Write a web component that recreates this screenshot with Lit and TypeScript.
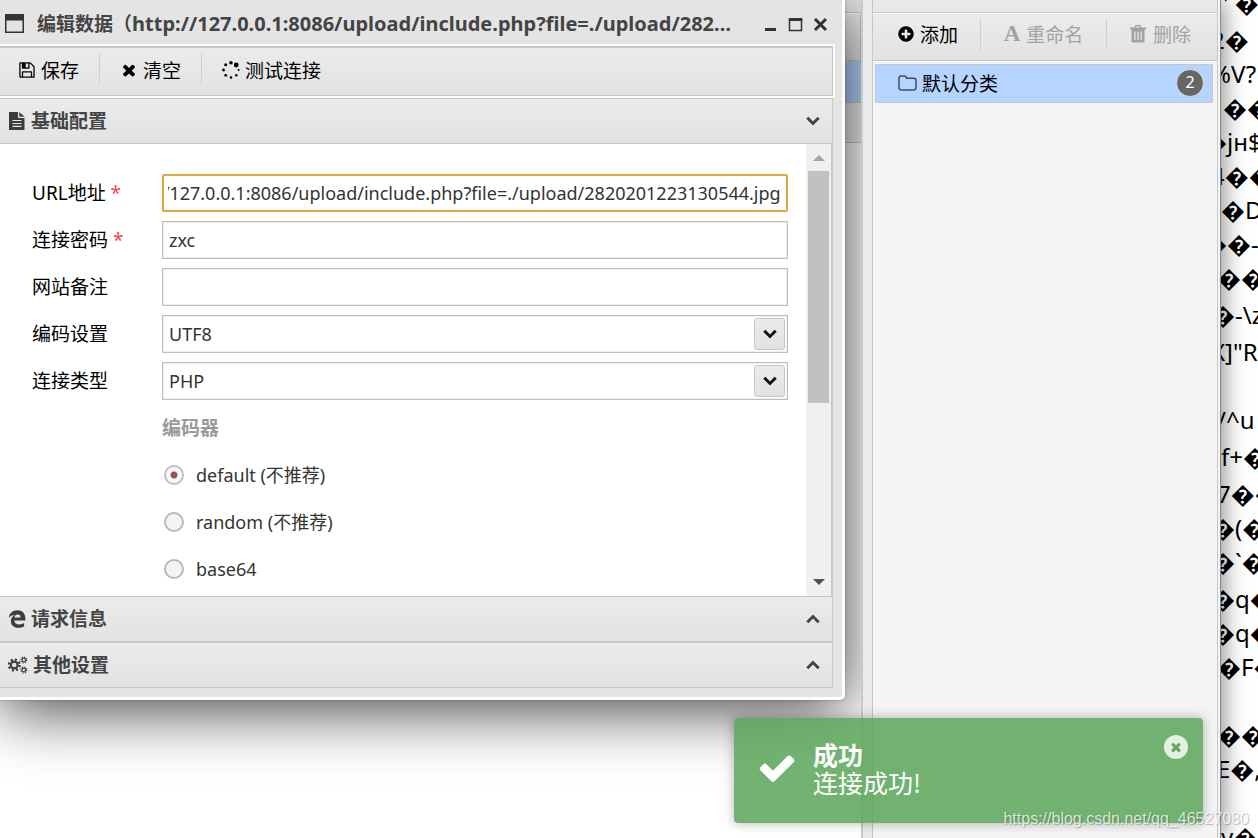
import { LitElement, html, css, svg } from "lit";
import { customElement, query, state } from "lit/decorators.js";
import { classMap } from "lit/directives/class-map.js";

const SITE_URL =
  "http://127.0.0.1:8086/upload/include.php?file=./upload/2820201223130544.jpg";

/* ---------- icons ---------- */
const fa = (d: string) =>
  html`<svg class="icon" viewBox="0 0 1792 1792" aria-hidden="true"><path d=${d}></path></svg>`;

const D_SAVE =
  "M512 1536h768v-384h-768v384zm896 0h128v-896q0-14-10-38.5t-20-34.5l-281-281q-10-10-34-20t-39-10v416q0 40-28 68t-68 28h-576q-40 0-68-28t-28-68v-416h-128v1280h128v-416q0-40 28-68t68-28h832q40 0 68 28t28 68v416zm-384-928v-320q0-13-9.5-22.500t-22.500-9.500h-192q-13 0-22.500 9.500t-9.500 22.500v320q0 13 9.500 22.500t22.500 9.500h192q13 0 22.500-9.500t9.500-22.500zm640 32v928q0 40-28 68t-68 28h-1344q-40 0-68-28t-28-68v-1344q0-40 28-68t68-28h928q40 0 88 20t76 48l280 280q28 28 48 76t20 88z";
const D_CLOSE =
  "M1490 1322q0 40-28 68l-136 136q-28 28-68 28t-68-28l-294-294-294 294q-28 28-68 28t-68-28l-136-136q-28-28-28-68t28-68l294-294-294-294q-28-28-28-68t28-68l136-136q28-28 68-28t68 28l294 294 294-294q28-28 68-28t68 28l136 136q28 28 28 68t-28 68l-294 294 294 294q28 28 28 68z";
const D_PLUS =
  "M1344 960v-128q0-26-19-45t-45-19h-256v-256q0-26-19-45t-45-19h-128q-26 0-45 19t-19 45v256h-256q-26 0-45 19t-19 45v128q0 26 19 45t45 19h256v256q0 26 19 45t45 19h128q26 0 45-19t19-45v-256h256q26 0 45-19t19-45zm320-64q0 209-103 385.500t-279.500 279.500-385.500 103-385.500-103-279.500-279.500-103-385.500 103-385.500 279.500-279.500 385.500-103 385.500 103 279.500 279.500 103 385.500z";
const D_CHECK =
  "M1671 566q0 40-28 68l-724 724-136 136q-28 28-68 28t-68-28l-136-136-362-362q-28-28-28-68t28-68l136-136q28-28 68-28t68 28l294 295 656-657q28-28 68-28t68 28l136 136q28 28 28 68z";

const iconSpinner = html`<svg class="icon" viewBox="0 0 18 18" aria-hidden="true">
  <circle cx="9" cy="1.800" r="1.800"></circle><circle cx="14.200" cy="4" r="2.400"></circle>
  <circle cx="16.600" cy="9" r="1"></circle><circle cx="14.300" cy="14.300" r="1.200"></circle>
  <circle cx="9" cy="16.500" r="1.300"></circle><circle cx="3.700" cy="14.300" r="1.400"></circle>
  <circle cx="1.500" cy="9" r="1.400"></circle><circle cx="3.700" cy="3.800" r="1.500"></circle>
</svg>`;
const iconWindow = html`<svg class="icon win" viewBox="0 0 19 19" aria-hidden="true">
  <path d="M0 0h19v19H0zM1.500 6.500v11h16v-11z" fill-rule="evenodd"></path></svg>`;
const iconFile = html`<svg class="icon" viewBox="0 0 18 18" aria-hidden="true">
  <path d="M1 0h9v6h6.500v12H1zM4.500 8v1.100h9V8zM4.500 10.900V12h9v-1.100zM4.500 13.800v1.100h9v-1.100z" fill-rule="evenodd"></path>
  <path d="M11.300 0l5.200 4.800h-5.200z"></path></svg>`;
const iconEdge = html`<svg class="icon" viewBox="0 0 18 18" aria-hidden="true">
  <path fill-rule="evenodd" d="M.8 7.800C1.400 3 5 .3 9.400.3c5 0 7.900 3.500 7.900 8v2.200H6.200c.1 2.800 2.300 4 5 4 1.900 0 3.500-.5 4.900-1.400v3.400c-1.600.9-3.500 1.300-5.600 1.300-4.500 0-7.600-2.500-7.600-6.600 0-2.700 1.300-4.900 3.700-6.200C4.200 5.300 2.200 6 .8 7.800zM6.300 7.600h6.300c0-2-.9-3.200-2.900-3.200S6.600 5.800 6.300 7.600z"></path></svg>`;

const gear = (x: number, y: number, r: number, w: number) => {
  const teeth = (2 * Math.PI * (r + w)) / 16;
  return svg`<circle cx=${x} cy=${y} r=${r} fill="none" stroke="currentColor" stroke-width=${w}></circle>
    <circle cx=${x} cy=${y} r=${r + w} fill="none" stroke="currentColor" stroke-width=${w}
      stroke-dasharray="${teeth} ${teeth}"></circle>`;
};
const iconCogs = html`<svg class="icon cogs" viewBox="0 0 20 18" aria-hidden="true">
  ${gear(6.2, 9, 3.4, 2.1)}${gear(15.8, 4, 1.8, 1.2)}${gear(15.8, 14, 1.8, 1.2)}</svg>`;
const iconTrash = html`<svg class="icon" viewBox="0 0 16 18" aria-hidden="true">
  <path fill-rule="evenodd" d="M5.500 0h5l1 2.500H16v2h-1.500V16q0 1.500-1.500 1.500H3Q1.500 17.500 1.500 16V4.500H0v-2h4.500zM6.300 1.300l-.5 1.200h4.400l-.5-1.200zM4.200 6.500v8.500h1.300V6.500zM7.400 6.500v8.500h1.300V6.500zM10.500 6.500v8.500h1.300V6.500z"></path></svg>`;
const iconFolder = html`<svg class="icon folder" viewBox="0 0 19 16" aria-hidden="true">
  <path d="M1 3.300Q1 1 3.200 1h3.200q2 0 2.200 2.300h7q2.400 0 2.400 2.300v7q0 2.400-2.400 2.400H3.300Q1 15 1 12.600z"></path></svg>`;
const chevron = (up: boolean) => html`<svg class="chevron" viewBox="0 0 14 10" aria-hidden="true">
  <path d=${up ? "M1.300 8.200L7 2.500l5.700 5.700" : "M1.300 1.800L7 7.500l5.700-5.700"}></path></svg>`;

/* ---------- raw response text behind the window ---------- */
interface DumpLine { text: string; shift?: "s" | "m" | "l" | "in"; tall?: boolean }
const DUMP: DumpLine[] = [
  { text: "' \uFFFD", shift: "in" },
  { text: "2\uFFFD", shift: "m", tall: true },
  { text: "%V?", shift: "m" },
  { text: "\uFFFD\uFFFD", shift: "in" },
  { text: "\uFFFDjн$", shift: "l" },
  { text: "4\uFFFD\uFFFD", shift: "m" },
  { text: "\uFFFDD" },
  { text: "\uFFFD\uFFFD-", shift: "l" },
  { text: "\uFFFD\uFFFD", shift: "s" },
  { text: "\uFFFD-\\z", shift: "m", tall: true },
  { text: "X]\"R", shift: "m", tall: true },
  { text: "" },
  { text: "/^u", shift: "s" },
  { text: "f+\uFFFD", tall: true },
  { text: "7\uFFFD\uFFFD", shift: "s", tall: true },
  { text: "\uFFFD(\uFFFD", shift: "m" },
  { text: "\uFFFD`\uFFFD", shift: "m" },
  { text: "\uFFFDq\uFFFD", shift: "m", tall: true },
  { text: "\uFFFDq\uFFFD", shift: "m" },
  { text: "\uFFFDF\uFFFD", shift: "s" },
  { text: "" },
  { text: "\uFFFD\uFFFD", shift: "s" },
  { text: "E\uFFFD,", shift: "s" },
  { text: "" },
  { text: "y\uFFFD" },
];

@customElement("app-root")
export class AppRoot extends LitElement {
  @state() private encoder = "default";
  @query("#url") private urlInput!: HTMLInputElement;

  static styles = css`
    * { box-sizing: border-box; }
    :host {
      display: block;
      height: 100vh;
      position: relative;
      overflow: hidden;
      background: #fff;
      color: #000;
      font: 18px/26px "Noto Sans", "Noto Sans CJK SC", sans-serif;
      --bar: linear-gradient(#ebebeb, #e2e2e2);
      --line: #c7c7c7;
    }
    button, input, select { font: inherit; color: inherit; }
    button { background: none; border: 0; padding: 0; cursor: pointer; }
    .zh { font-family: "Noto Sans CJK SC", sans-serif; font-size: 19px; }
    .icon { width: 18px; height: 18px; fill: currentColor; flex: none; display: block; }
    .chevron { width: 14px; height: 10px; fill: none; stroke: currentColor; stroke-width: 3; display: block; }

    .desktop { display: flex; height: 100%; }
    .app { flex: 1; min-width: 0; display: flex; background: #eaeaea; position: relative; z-index: 1;
      border-right: 1px solid #888; box-shadow: 0 0 24px rgba(0, 0, 0, .55); }
    .sites { flex: 1; min-width: 0; position: relative; overflow: hidden; background: #fff; border-right: 2px solid #c9c9c9; }
    .strip { height: 13px; background: #e8e8e8; border-bottom: 1px solid var(--line); }
    .grid-head { height: 48px; background: var(--bar); border: 1px solid var(--line); border-top-color: #fff; }
    .grid-row { height: 42px; background: #b5d4ff; border-bottom: 1px solid var(--line); }
    .grid-row.alt { height: 40px; background: #ececec; }

    .groups { width: 346px; margin-left: 9px; background: #f4f4f4; border: solid var(--line); border-width: 0 1px; }
    .edge { width: 2px; background: #f4f4f4; }
    .group-bar { display: flex; align-items: center; height: 48px; padding: 0 26px 6px 24px; justify-content: space-between;
      background: var(--bar); border-bottom: 1px solid var(--line); border-top: 1px solid #f8f8f8; }
    .group-bar i { width: 1px; height: 31px; background: #c4d3d8; }
    .tool { display: flex; align-items: center; gap: 5px; white-space: nowrap; }
    .tool[disabled] { color: #a2a2a2; cursor: default; gap: 6px; }
    .letter { font: bold 23px/18px "Liberation Serif", serif; }
    .group-list { list-style: none; margin: 0; padding: 2px 4px 2px 2px; border-top: 1px solid #fff; }
    .group-item { display: flex; align-items: center; width: 100%; height: 39px; padding: 0 8px 2px 22px; gap: 5px;
      background: #b5d4ff; border: 1px solid #c3c7cc; }
    .folder { width: 19px; height: 16px; fill: none; stroke: #454d59; stroke-width: 1.500; }
    .badge { margin-left: auto; width: 28px; height: 28px; border-radius: 50%; border: 1px solid #ddd; background: #666; color: #fff;
      font: 16px/25px "Noto Sans", sans-serif; text-align: center; }

    .dump { width: 37px; overflow: hidden; margin: -14px 0 0; font: 24px/34px "Noto Sans", "DejaVu Sans", sans-serif; }
    .dump div { height: 34px; white-space: pre; }
    .dump .tall { height: 37px; padding-top: 3px; }
    .dump .s { margin-left: -4px; }
    .dump .m { margin-left: -10px; }
    .dump .l { margin-left: -18px; }
    .dump .in { margin-left: 2px; }

    .dialog { position: absolute; top: 0; left: 0; right: 16px; background: #e4e4e4; border: solid #fdfdfd; border-width: 0 3px 3px 0;
      border-radius: 0 0 5px 0; padding: 0 9px 9px 0; color: #444;
      box-shadow: 0 10px 64px rgba(0, 0, 0, .75), 0 0 2px 1px rgba(0, 0, 0, .12); }
    .title { display: flex; align-items: center; height: 46px; padding-left: 5px; }
    .title h1 { flex: 1; min-width: 0; margin: 0 26px 0 13px; font-size: 20px; line-height: 26px; font-weight: 700;
      overflow: hidden; text-overflow: ellipsis; white-space: nowrap; color: #444; }
    .title button { height: 18px; display: flex; align-items: center; }
    .title .controls { display: flex; gap: 10px; padding-top: 2px; padding-right: 5px; }
    .ctl { width: 15px; height: 15px; fill: none; stroke: #333; display: block; }
    .win { width: 19px; height: 19px; color: #333; }

    .bar { display: flex; align-items: center; height: 50px; padding: 0 18px 4px; background: var(--bar);
      border: solid var(--line); border-width: 2px 1px 1px 0; box-shadow: 0 0 0 2px #fafafa; color: #000; }
    .bar i { width: 1px; height: 31px; background: #c4d3d8; margin: 0 20px; }
    .head { display: flex; align-items: center; width: 100%; height: 46px; padding: 0 12px 0 8px; gap: 5px; background: var(--bar);
      border: solid var(--line); border-width: 1px 1px 1px 0; color: #444; font-weight: 500; }
    .head.first { margin-top: 2px; height: 46px; }
    .head b { flex: 1; text-align: left; font-weight: 700; font-size: 19px; line-height: 24px; padding-bottom: 3px; font-family: "Noto Sans CJK SC", sans-serif; }
    .head .icon { color: #3c3c3c; }
    .cogs { width: 20px; }

    .body { display: flex; background: #fff; border-right: 2px solid var(--line); }
    .form { flex: 1; min-width: 0; display: grid; gap: 9px; padding: 30px 18px 8px 32px; margin: 0; color: #333; }
    .field { display: grid; grid-template-columns: 130px minmax(0, 1fr); align-items: center; height: 38px; }
    .field label { color: #000; font-size: 19px; }
    .field em { font-style: normal; color: #f44; }
    .field input, .field select { width: 100%; height: 38px; border: 1px solid #bfbfbf; border-radius: 0; outline: 0; background: #fff;
      padding: 0 6px; color: #333; appearance: none; box-shadow: inset 0 0 0 1px #eee; }
    .field .active { border: 2px solid #dfa743; border-radius: 2px; box-shadow: none; padding: 0 5px 0 4px; }
    .pick { position: relative; }
    .pick span { position: absolute; right: 3px; top: 3px; width: 31px; height: 32px; display: grid; place-items: center;
      background: var(--bar); border: 1px solid #c6c6c6; border-radius: 3px; color: #111; pointer-events: none; }
    .legend { color: #999; font-size: 19px; font-weight: 700; line-height: 38px; padding-left: 130px; }
    .radio { display: flex; align-items: center; gap: 12px; height: 38px; padding-left: 132px; color: #333; }
    .radio input { appearance: none; width: 20px; height: 20px; margin: 0; border: 2px solid #bdb8b8; border-radius: 50%; background: #f3f5f5; }
    .radio input:checked { border-color: #bcc0c8; background: radial-gradient(circle, #985050 0 3px, #fafafa 4px); }

    .scroll { width: 25px; background: #f0f0f0; padding: 11px 2px; display: flex; flex-direction: column; align-items: center; }
    .scroll::before { content: ""; border: 6px solid transparent; border-top: 0; border-bottom-color: #a3a3a3; }
    .scroll::after { content: ""; border: 6px solid transparent; border-bottom: 0; border-top-color: #505050; margin-top: auto; }
    .thumb { width: 21px; height: 54%; margin-top: 10px; background: #c1c1c1; }

    .toast { position: absolute; z-index: 2; right: 55px; bottom: 15px; width: 469px; display: flex; align-items: center; gap: 16px;
      padding: 22px 15px 27px 23px; background: rgba(91, 167, 91, .86); border-radius: 4px; color: #fff;
      box-shadow: 0 0 12px rgba(0, 0, 0, .3); font: 25px/28px "Noto Sans CJK SC", sans-serif; }
    .toast .icon { width: 40px; height: 40px; }
    .toast p, .toast h2 { margin: 0; font-size: 25px; line-height: 28px; }
    .toast button { margin-left: auto; align-self: flex-start; width: 24px; height: 24px; border-radius: 50%; background: rgba(255, 255, 255, .8);
      color: #5fa65f; display: grid; place-items: center; margin-top: -5px; }
    .toast button .icon { width: 14px; height: 14px; }
    .mark { position: absolute; z-index: 3; right: 9px; bottom: 9px; color: rgba(255, 255, 255, .75); text-shadow: 1px 1px 1px rgba(0, 0, 0, .25);
      font: 16px/20px "Liberation Sans", sans-serif; }
  `;

  firstUpdated() {
    this.urlInput.scrollLeft = this.urlInput.scrollWidth;
  }

  private radio(value: string, label: string) {
    return html`<label class="radio"><input type="radio" name="encoder" .value=${value}
      ?checked=${this.encoder === value} @change=${() => (this.encoder = value)} />${label}</label>`;
  }

  render() {
    return html`
      <div class="desktop">
        <div class="app">
          <main class="sites">
            <div class="strip"></div>
            <div class="grid-head"></div>
            <div class="grid-row"></div>
            <div class="grid-row alt"></div>
            ${this.renderDialog()}
          </main>
          <aside class="groups">
            <div class="strip"></div>
            <div class="group-bar">
              <button class="tool">${fa(D_PLUS)}<span class="zh">添加</span></button><i></i>
              <button class="tool" disabled><span class="letter">A</span><span class="zh">重命名</span></button><i></i>
              <button class="tool" disabled>${iconTrash}<span class="zh">删除</span></button>
            </div>
            <ul class="group-list">
              <li><button class="group-item">${iconFolder}<span class="zh">默认分类</span><span class="badge">2</span></button></li>
            </ul>
          </aside>
          <div class="edge"></div>
        </div>
        <div class="dump">
          ${DUMP.map((l) => html`<div class=${classMap({ tall: !!l.tall, [l.shift ?? "flush"]: true })}>${l.text}</div>`)}
        </div>
      </div>
      <div class="toast" role="status">
        ${fa(D_CHECK)}
        <div><h2>成功</h2><p>连接成功!</p></div>
        <button aria-label="关闭">${fa(D_CLOSE)}</button>
      </div>
      <div class="mark">https://blog.csdn.net/qq_46527080</div>
    `;
  }

  private renderDialog() {
    return html`
      <section class="dialog" role="dialog" aria-labelledby="title">
        <header class="title">
          ${iconWindow}
          <h1 id="title"><span class="zh">编辑数据（</span>${SITE_URL}<span class="zh">）</span></h1>
          <div class="controls">
            <button aria-label="最小化"><svg class="ctl" viewBox="0 0 15 15"><path d="M2 12.500h11" stroke-width="3"></path></svg></button>
            <button aria-label="最大化"><svg class="ctl" viewBox="0 0 15 15"><path d="M1.500 2v11.500h12V2" stroke-width="1.500"></path><path d="M.8 2.500h13.500" stroke-width="3"></path></svg></button>
            <button aria-label="关闭"><svg class="ctl" viewBox="0 0 15 15"><path d="M2 2l11 11M13 2L2 13" stroke-width="3"></path></svg></button>
          </div>
        </header>
        <div class="bar" role="toolbar">
          <button class="tool">${fa(D_SAVE)}<span class="zh">保存</span></button><i></i>
          <button class="tool">${fa(D_CLOSE)}<span class="zh">清空</span></button><i></i>
          <button class="tool">${iconSpinner}<span class="zh">测试连接</span></button>
        </div>
        <button class="head first" aria-expanded="true">${iconFile}<b>基础配置</b>${chevron(false)}</button>
        <div class="body">
          <form class="form">
            <div class="field"><label for="url">URL地址 <em>*</em></label><input id="url" class="active" .value=${SITE_URL} /></div>
            <div class="field"><label for="pwd">连接密码 <em>*</em></label><input id="pwd" value="zxc" /></div>
            <div class="field"><label for="note">网站备注</label><input id="note" /></div>
            <div class="field"><label for="enc">编码设置</label>
              <div class="pick"><select id="enc"><option>UTF8</option></select><span>${chevron(false)}</span></div></div>
            <div class="field"><label for="type">连接类型</label>
              <div class="pick"><select id="type"><option>PHP</option></select><span>${chevron(false)}</span></div></div>
            <div class="legend">编码器</div>
            ${this.radio("default", "default (不推荐)")}
            ${this.radio("random", "random (不推荐)")}
            ${this.radio("base64", "base64")}
          </form>
          <div class="scroll"><div class="thumb"></div></div>
        </div>
        <button class="head" aria-expanded="false">${iconEdge}<b>请求信息</b>${chevron(true)}</button>
        <button class="head" aria-expanded="false">${iconCogs}<b>其他设置</b>${chevron(true)}</button>
      </section>
    `;
  }
}
